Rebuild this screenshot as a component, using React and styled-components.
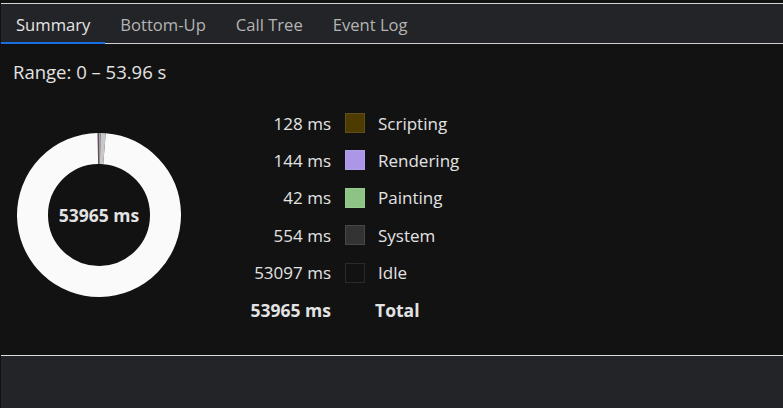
import React from "react";
import styled, { createGlobalStyle } from "styled-components";

const GlobalStyle = createGlobalStyle`
  html, body {
    margin: 0;
    padding: 0;
    background: #121212;
  }
  body {
    font-family: "Open Sans", "Noto Sans", sans-serif;
    color: #e3e3e3;
  }
`;

const Page = styled.div`
  height: 408px;
  display: flex;
  flex-direction: column;
  padding-top: 3px;
  padding-left: 1px;
  box-sizing: border-box;
  background: #121212;
`;

const TabBar = styled.div`
  display: flex;
  height: 39px;
  background: #232427;
  border-top: 1px solid #d4d4d4;
  border-bottom: 1px solid #cfcfcf;
`;

const Tab = styled.div`
  display: flex;
  align-items: center;
  padding: 3px 15px 0;
  font-size: 16.6px;
  color: ${(p) => (p.$active ? "#e6e6e6" : "#b4b4b4")};
  box-sizing: border-box;
  height: 40px;
  border-bottom: 2px solid ${(p) => (p.$active ? "#1a6fe0" : "transparent")};
  margin-bottom: -1px;
`;

const Content = styled.div`
  flex: 1;
  padding: 16px 12px 0 12px;
  border-bottom: 1px solid #dcdcdc;
`;

const Range = styled.div`
  font-size: 18.5px;
  line-height: 24px;
`;

const Chart = styled.div`
  display: flex;
  align-items: center;
  margin-top: 29px;
`;

const Donut = styled.div`
  position: relative;
  width: 166px;
  height: 166px;
  margin-left: 3px;
  margin-top: -2px;
  flex-shrink: 0;
`;

const DonutLabel = styled.div`
  position: absolute;
  inset: 0;
  display: flex;
  align-items: center;
  justify-content: center;
  font-size: 17.5px;
  font-weight: 700;
  color: #e3e3e3;
`;

const Legend = styled.div`
  display: grid;
  grid-template-columns: 90px 20px auto;
  grid-auto-rows: 20px;
  column-gap: 14px;
  row-gap: 17.4px;
  margin-left: 59px;
  align-items: center;
`;

const Value = styled.div`
  text-align: right;
  font-size: ${(p) => (p.$bold ? "17.5px" : "17px")};
  font-weight: ${(p) => (p.$bold ? 700 : 400)};
  white-space: nowrap;
`;

const Swatch = styled.div`
  width: 20px;
  height: 20px;
  box-sizing: border-box;
  background: ${(p) => p.$color};
  border: 1px solid rgba(255, 255, 255, 0.1);
`;

const Label = styled.div`
  font-size: ${(p) => (p.$bold ? "17.5px" : "17px")};
  font-weight: ${(p) => (p.$bold ? 700 : 400)};
  margin-left: ${(p) => (p.$bold ? "-4px" : "-1px")};
  white-space: nowrap;
`;

const Footer = styled.div`
  height: 52px;
  background: #232427;
`;

const items = [
  { label: "Scripting", ms: 128, color: "#4e3b00", ring: "#6b5200" },
  { label: "Rendering", ms: 144, color: "#ab96e8", ring: "#ab96e8" },
  { label: "Painting", ms: 42, color: "#8dc385", ring: "#8dc385" },
  { label: "System", ms: 554, color: "#333333", ring: "#c8c8c8" },
  { label: "Idle", ms: 53097, color: "#121212", ring: "#fafafa" },
];

const total = items.reduce((s, i) => s + i.ms, 0);

function DonutChart() {
  const r = 66.5;
  const c = 2 * Math.PI * r;
  let offset = 0;
  return (
    <Donut>
      <svg width="166" height="166" viewBox="0 0 166 166">
        <g transform="rotate(-91 83 83)">
          {items.map((it) => {
            const len = (it.ms / total) * c;
            const el = (
              <circle
                key={it.label}
                cx="83"
                cy="83"
                r={r}
                fill="none"
                stroke={it.ring}
                strokeWidth="31"
                strokeDasharray={`${len} ${c - len}`}
                strokeDashoffset={-offset}
              />
            );
            offset += len;
            return el;
          })}
        </g>
      </svg>
      <DonutLabel>{total} ms</DonutLabel>
    </Donut>
  );
}

export default function App() {
  const tabs = ["Summary", "Bottom-Up", "Call Tree", "Event Log"];
  return (
    <>
      <GlobalStyle />
      <Page>
        <TabBar>
          {tabs.map((t, i) => (
            <Tab key={t} $active={i === 0}>
              {t}
            </Tab>
          ))}
        </TabBar>
        <Content>
          <Range>Range: 0 – 53.96 s</Range>
          <Chart>
            <DonutChart />
            <Legend>
              {items.map((it) => (
                <React.Fragment key={it.label}>
                  <Value>{it.ms} ms</Value>
                  <Swatch $color={it.color} />
                  <Label>{it.label}</Label>
                </React.Fragment>
              ))}
              <Value $bold>{total} ms</Value>
              <div />
              <Label $bold>Total</Label>
            </Legend>
          </Chart>
        </Content>
        <Footer />
      </Page>
    </>
  );
}
